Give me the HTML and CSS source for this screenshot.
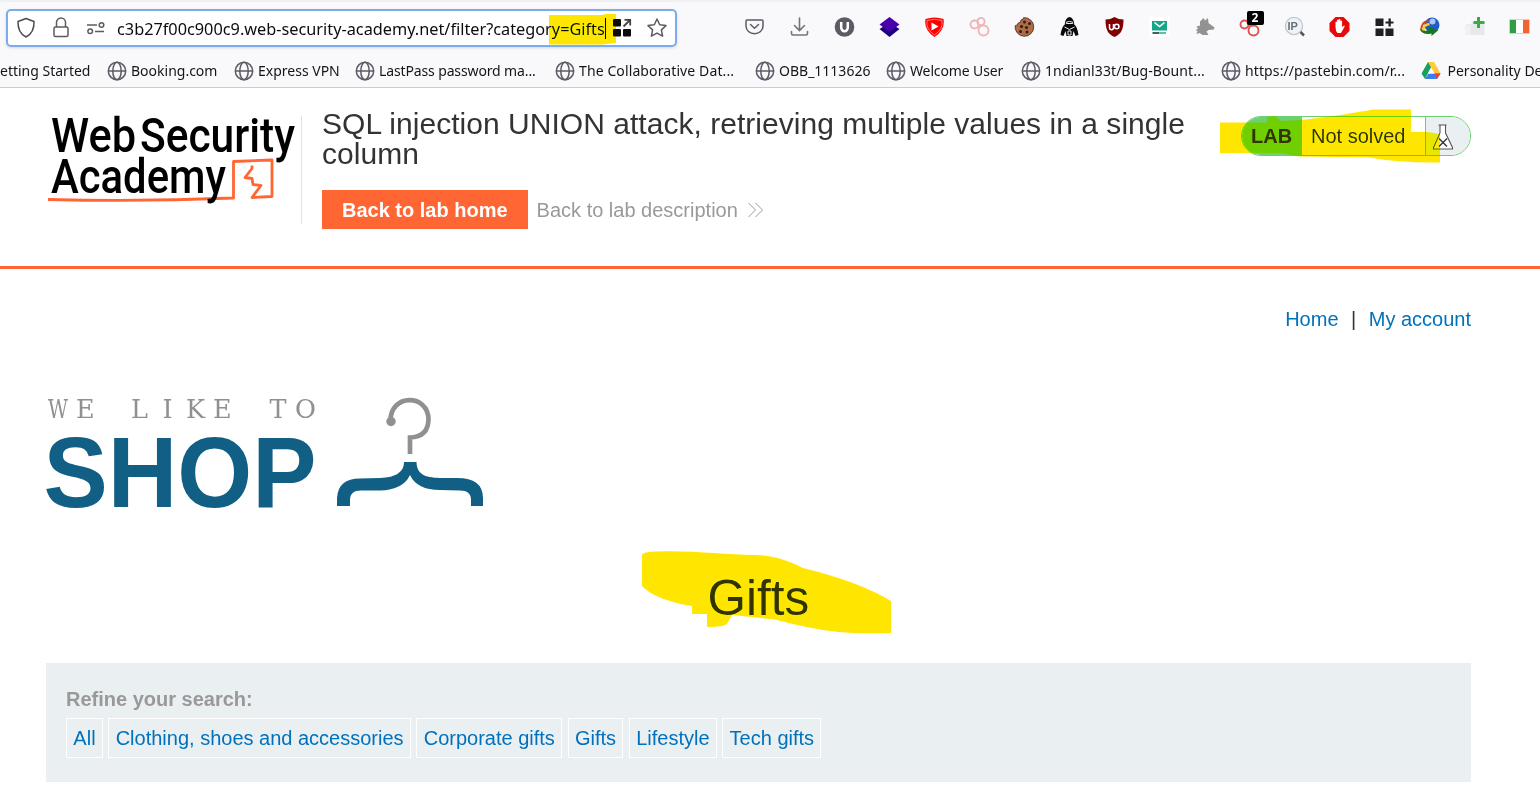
FILE: index.html
```html
<!DOCTYPE html>
<html lang="en">
<head>
<meta charset="utf-8">
<title>SQL injection UNION attack</title>
<link rel="stylesheet" href="styles.css">
</head>
<body>
<svg class="defs" width="0" height="0">
  <symbol id="globe" viewBox="0 0 20 20"><g fill="none" stroke="#5b5b66" stroke-width="1.5"><circle cx="10" cy="10" r="8.7"/><ellipse cx="10" cy="10" rx="4.2" ry="8.7"/><path d="M1.5 10h17"/></g></symbol>
</svg>
<div class="chrome">
  <div class="toolbar">
    <div class="urlbar">
      <svg class="shield" width="20" height="22" viewBox="0 0 20 22"><path d="M10 1.5 18 4.5C18.3 12 15 17.5 10 20 5 17.5 1.700 12 2 4.500Z" fill="none" stroke="#4c4c52" stroke-width="1.5" stroke-linejoin="round"/></svg>
      <svg class="lock" width="18" height="22" viewBox="0 0 18 22"><g fill="none" stroke="#5b5b62" stroke-width="1.5"><rect x="2" y="10" width="14" height="9.500" rx="1.500"/><path d="M4.500 10V5.500a4.500 4.500 0 0 1 9 0V10"/></g></svg>
      <svg class="perms" width="20" height="14" viewBox="0 0 20 14"><g fill="none" stroke="#5b5b62" stroke-width="1.500"><path d="M1 4h10M9 10.500h9"/><circle cx="15.500" cy="4" r="2.300"/><circle cx="4.200" cy="10.300" r="2.300"/></g></svg>
      <span class="url">c3b27f00c900c9.web-security-academy.net/filter?category=Gifts</span>
      <svg class="tiles" width="20" height="20" viewBox="0 0 20 20"><g fill="#0c0c0d"><rect x="1" y="1" width="8" height="7.500" rx="1"/><rect x="1" y="11" width="8" height="7.500" rx="1"/><rect x="11" y="11" width="8" height="7.500" rx="1"/></g><path d="M11.500 8.500 17.500 2.500M12.500 1.800h5.700v5.700" fill="none" stroke="#444" stroke-width="1.800"/></svg>
      <svg class="star" width="22" height="22" viewBox="0 0 22 22"><path d="M11 2l2.700 5.800 6.300.8-4.600 4.300 1.200 6.300L11 16.100 5.400 19.200l1.200-6.300L2 8.600l6.300-.8Z" fill="none" stroke="#5b5b62" stroke-width="1.500" stroke-linejoin="round"/></svg>
    </div>
    <div class="extensions">
      <svg viewBox="0 0 20 20"><path d="M2.500 3h15q1 0 1 1v5a8.500 7.700 0 0 1-17 0V4q0-1 1-1Z M6 7.500l4 3.700 4-3.700" fill="none" stroke="#5b5b66" stroke-width="1.500" stroke-linecap="round" stroke-linejoin="round"/></svg>
      <svg viewBox="0 0 20 20"><path d="M10 1v12M5 8.500l5 5 5-5M2 14.500v2q0 1.500 1.500 1.500h13q1.500 0 1.500-1.500v-2" fill="none" stroke="#73737c" stroke-width="1.600" stroke-linecap="round"/></svg>
      <svg viewBox="0 0 20 20"><circle cx="10" cy="10" r="9.800" fill="#5b5b66"/><path d="M6.700 5v5.500a3.300 3.700 0 0 0 6.600 0V5" fill="none" stroke="#fff" stroke-width="2.500"/></svg>
      <svg viewBox="0 0 20 20"><path d="M0 12 10 6l10 6-10 8Z" fill="#1b0080"/><path d="M0 7.500 10 0l10 7.500L10 15Z" fill="#4b00ae"/></svg>
      <svg viewBox="0 0 20 20"><path d="M1 2Q10-1 19 2 21 13 10 20-1 13 1 2Z" fill="#f00"/><path d="M2.500 3.500Q10 1 17.500 3.500 19 12 10 18 1 12 2.500 3.500Z" fill="none" stroke="#ff9a9a" stroke-width=".8"/><path d="M7 5.500v8l7-4Z" fill="#fff"/></svg>
      <svg viewBox="0 0 20 20"><g fill="none" stroke="#ecb5b8" stroke-width="1.900"><circle cx="5" cy="7.500" r="4"/><circle cx="11.500" cy="4.500" r="3.600"/><circle cx="14" cy="13.500" r="5"/></g></svg>
      <svg viewBox="0 0 20 20"><path d="M9 .7a9.300 9.300 0 1 1-8.300 8q2.500 0 2.800-2.500Q7 6 6.500 3q2.500 0 2.500-2.300Z" fill="#b46a43" stroke="#593d31" stroke-width="1"/><g fill="#272120"><circle cx="10" cy="5" r="1.500"/><circle cx="15" cy="6.500" r="1.500"/><circle cx="7" cy="9.500" r="1.600"/><circle cx="12" cy="10.500" r="1.600"/><circle cx="6" cy="14.500" r="1.500"/><circle cx="12.500" cy="15" r="1.500"/></g></svg>
      <svg viewBox="0 0 20 20"><path d="M10 0q4.500 1 4.700 7.500Q18 10 19 18l-3 1-2-5-1 5H7l-1-5-2 5-3-1Q2 10 5.300 7.500 5.500 1 10 0Z" fill="#090909"/><path d="M6.800 5.200q3.200-1.600 6.400 0v1.300H6.800ZM5 10l5 2.500 5-2.500M8.500 14h3v4h-3Z" fill="none" stroke="#fff" stroke-width=".9"/></svg>
      <svg viewBox="0 0 20 20"><path d="M10 0q4 2.500 9 2.500C19 12 17 17 10 20 3 17 1 12 1 2.500Q6 2.500 10 0Z" fill="#800000"/><path d="M5 7v3.500a1.800 2 0 0 0 4 0V7" fill="none" stroke="#fff" stroke-width="1.500"/><circle cx="12.200" cy="9.500" r="2.300" fill="none" stroke="#fff" stroke-width="1.500"/></svg>
      <svg viewBox="0 0 20 20"><rect width="20" height="20" fill="#fff"/><rect x="2.500" y="4" width="15" height="9.500" fill="#18a68a"/><path d="m5 5.500 5 4 5-4" fill="none" stroke="#fff" stroke-width="1.600"/><path d="M3 16h7" stroke="#244" stroke-width="1.700"/><path d="M10.500 16h6" stroke="#3bb89f" stroke-width="1.700"/></svg>
      <svg viewBox="0 0 20 20"><path d="M5.500 4.500 9 1l1.500 2.500L13.500 1l.5 5 6 4.500-.5 2-5.500.5-2 1.500 2 3.500H8l-3-2-3 1 1-3-2-1 2.500-1L2 9.500l3.500-1Z" fill="#929292"/></svg>
      <div class="badged"><svg viewBox="0 0 20 20"><g fill="none" stroke="#df5050" stroke-width="1.900"><circle cx="5" cy="7.500" r="4"/><circle cx="11.500" cy="4.500" r="3.600"/><circle cx="14" cy="13.500" r="5"/></g></svg><span class="badge">2</span></div>
      <svg viewBox="0 0 20 20"><circle cx="9.500" cy="9" r="8.600" fill="#edf3f6" stroke="#bfc9cf" stroke-width="1.300"/><path d="m16 15 3.500 3.500" stroke="#555" stroke-width="2.500"/><text x="3" y="13" class="ip">IP</text></svg>
      <svg viewBox="0 0 20 20"><path d="M6 0h8l6 6v8l-6 6H6l-6-6V6Z" fill="#e80909"/><path d="M6 10V5q1-1 1.500 0V3q1-1 1.700 0V2.500q1-1 1.700 0V4q1-1 1.700 0v6l2-1.500q1 .5.300 1.500L11.500 16H8Q6 14 6 10Z" fill="#fff"/></svg>
      <svg viewBox="0 0 20 20"><path d="M1 1.500h8v7.500H1ZM1 11.500h8V19H1ZM11 11.500h8V19h-8ZM14 1.500h2.300v8H14ZM11 4.500h8v2h-8Z" fill="#202024"/></svg>
      <svg viewBox="0 0 20 20"><circle cx="12.500" cy="8" r="7.500" fill="#235bc6"/><circle cx="13" cy="4.500" r="3" fill="#a8caf5"/><path d="M2 14Q1 5 9 4" fill="none" stroke="#d84519" stroke-width="1.800"/><path d="M4 14Q3 8 10 7" fill="none" stroke="#f5cf22" stroke-width="2.600"/><path d="M0 10q1 5 9 3.500V10l10 3-7 6v-2.500Q1 19 0 10Z" fill="#167720"/></svg>
      <svg viewBox="0 0 20 20"><path d="M2 7h9v11H2ZM7 5h13v13H7Z" fill="#e5e9ec"/><path d="M0 8h6v10H1Z" fill="#f0f1f3"/><path d="M12.500 0h3v4H20v3h-4.500v4h-3V7H9V4h3.500Z" fill="#39a949"/></svg>
      <svg viewBox="0 0 20 20"><path d="M0 2.500h20v14H0Z" fill="#b9a58c"/><path d="M.5 3H6.500v13h-6Z" fill="#2f9e42"/><path d="M6.500 3h7v13h-7Z" fill="#fff"/><path d="M13.500 3h6v13h-6Z" fill="#f3632d"/></svg>
    </div>
  </div>
  <div class="bookmarks">
    <span class="bm">etting Started</span>
    <span class="bm"><svg><use href="#globe"/></svg>Booking.com</span>
    <span class="bm"><svg><use href="#globe"/></svg>Express VPN</span>
    <span class="bm tight"><svg><use href="#globe"/></svg>LastPass password ma...</span>
    <span class="bm wide"><svg><use href="#globe"/></svg>The Collaborative Dat...</span>
    <span class="bm"><svg><use href="#globe"/></svg>OBB_1113626</span>
    <span class="bm tight"><svg><use href="#globe"/></svg>Welcome User</span>
    <span class="bm wide"><svg><use href="#globe"/></svg>1ndianl33t/Bug-Bount...</span>
    <span class="bm wide"><svg><use href="#globe"/></svg>https://pastebin.com/r...</span>
    <span class="bm drive"><svg viewBox="0 0 20 20"><path d="M7 1h6L4 18 .5 12.500Z" fill="#16a05b"/><path d="M7 1h6l6.500 11.500h-6Z" fill="#ffcb3b"/><path d="M4 18l3.500-5.500h12L16 18Z" fill="#3d7df0"/><path d="M13.500 12.500h6L16 18Z" fill="#e94235"/><path d="m10 6.500 3.300 6H6.700Z" fill="#f9f9fb"/></svg>Personality De</span>
  </div>
</div>

<header class="lab-header">
  <div class="logo">
    <svg width="255" height="108" viewBox="46 116 255 108">
      <path d="M48 199.500Q140 202 233.500 198V161.500L272 160v36.500l-20 1 9-12-8-1-1-6-7-1 7-9v-3" fill="none" stroke="#ff6633" stroke-width="2.800" stroke-linejoin="round"/>
      <g class="wordmark">
        <text x="51" y="152" textLength="85" lengthAdjust="spacingAndGlyphs">Web</text>
        <text x="140" y="152" textLength="155" lengthAdjust="spacingAndGlyphs">Security</text>
        <text x="51" y="193" textLength="175" lengthAdjust="spacingAndGlyphs">Academy</text>
      </g>
    </svg>
  </div>
  <div class="title">
    <h2>SQL injection UNION attack, retrieving multiple values in a single column</h2>
    <div class="actions">
      <a class="button">Back to lab home</a>
      <a class="back">Back to lab description <svg width="15" height="16" viewBox="0 0 15 16"><path d="m.5 1 7 7-7 7M7.500 1l7 7-7 7" fill="none" stroke="#999" stroke-width="1"/></svg></a>
    </div>
  </div>
  <div class="status">
    <span class="lab">LAB</span><span class="state">Not solved</span>
    <span class="flask"><svg width="22" height="28" viewBox="0 0 22 28"><path d="M6.500 2h8M8 2v8L1.500 24.500v1.500h19v-1.500L13.500 10V2" fill="#fff" stroke="#555" stroke-width="1.100"/><path d="m7 15.500 8 8m0-8-8 8" stroke="#333" stroke-width="1.400"/></svg></span>
  </div>
</header>

<main>
  <nav><a>Home</a><span>|</span><a>My account</a></nav>
  <svg class="shop" width="440" height="114" viewBox="46 396 440 114">
    <g class="tagline">
      <text x="48" y="418" textLength="20" lengthAdjust="spacingAndGlyphs">W</text>
      <text y="418" x="76 131 162.500 186 213 269.500 295">ELIKETO</text>
    </g>
    <text class="shop-name" x="43.500" y="507" textLength="273" lengthAdjust="spacingAndGlyphs">SHOP</text>
    <path d="M390.500 421C390 393.500 428.500 393.500 428.500 419.500Q428 437 410 437.500V454" fill="none" stroke="#8f9090" stroke-width="4.700"/>
    <circle cx="391" cy="421.500" r="4.700" fill="#8f9090"/>
    <path d="M404 462h12.500C417 474 424 477.500 440 478H457Q483 478 483 498v8H471V500Q471 490.500 460 490.500L440 490Q417 490 410 475 403 490 380 490.500H361Q350 490.500 350 500v6H337V498Q338 478.500 360 478.500L380 478Q404 477 404 462Z" fill="#125f85"/>
  </svg>
  <h1>Gifts</h1>
  <section class="filters">
    <label>Refine your search:</label>
    <div class="chips"><a>All</a><a>Clothing, shoes and accessories</a><a>Corporate gifts</a><a>Gifts</a><a>Lifestyle</a><a>Tech gifts</a></div>
  </section>
</main>

<svg class="marker" width="1540" height="802" viewBox="0 0 1540 802">
  <path d="M549 15H602L606 14H616V43L602 44.500H549Z"/>
  <path d="M1220 122.500H1267V117L1275 116L1281 121L1302 120Q1350 114 1373 109.500H1411V132H1427L1440 134V162.500Q1400 163 1369 157.500L1300 156.500 1280 153H1220Z"/>
  <path d="M642 555Q643 551 660 551.500C695 550.500 725 555 755 555Q778 555 803 568 860 582 891 601V633Q860 634 838 632 810 629 775 619.500L732 615 727 624Q724 627 707 627V614H692V606Q655 600 642 586Z"/>
</svg>
</body>
</html>
```
FILE: styles.css
```css
* { box-sizing: border-box; }
body {
  margin: 0;
  height: 802px;
  position: relative;
  overflow: hidden;
  background: #fff;
  color: #333332;
  font: 20px/24px "Liberation Sans", Arial, sans-serif;
}
.defs { position: absolute; }
h1, h2 { margin: 0; font-weight: normal; }

/* browser toolbar */
.chrome {
  height: 88px;
  padding-top: 7px;
  border-top: 2px solid #f0f0f2;
  border-bottom: 1px solid #ccc;
  background: #f9f9fb;
  color: #15141a;
  font-family: "Noto Sans", "Open Sans", sans-serif;
}
.toolbar { display: flex; height: 38px; padding-left: 6px; }
.urlbar {
  display: flex;
  flex: none;
  align-items: center;
  width: 671px;
  height: 38px;
  padding-left: 8px;
  border: 2px solid #7cacf0;
  border-radius: 5px;
  background: #fff;
  box-shadow: 0 1px 3px #0002;
}
.lock { margin-left: 16px; }
.perms { margin-left: 16px; margin-top: -1px; }
.url {
  width: 489px;
  margin-left: 11px;
  border-right: 1px solid #000;
  color: #0c0c0d;
  font-size: 16.3px;
  line-height: 20px;
  padding-top: 1px;
  white-space: nowrap;
}
.tiles { margin-left: 6px; }
.star { margin-left: 14px; }
.extensions { display: flex; flex: none; margin-left: 54.5px; }
.extensions > * { flex: none; width: 45px; height: 20px; margin-top: 8px; }
.badged { position: relative; }
.badged svg { display: block; width: 45px; height: 20px; }
.badge {
  position: absolute;
  left: 20px;
  top: -6px;
  width: 17px;
  height: 14px;
  border-radius: 2px;
  background: #000;
  color: #fff;
  font: bold 12px/14px "Noto Sans", sans-serif;
  text-align: center;
}
.ip { font: bold 11px "Liberation Sans", sans-serif; fill: #687078; }
.bookmarks {
  display: grid;
  grid-template-columns: 106.5px 127px 121px 200px 200px 131px 135px 200px 200px 140px;
  height: 40px;
  margin-top: 4px;
  font-size: 14px;
  line-height: 40px;
}
.bm { display: flex; align-items: center; white-space: nowrap; }
.bm.tight { letter-spacing: -0.13px; }
.bm.wide { letter-spacing: 0.11px; }
.bm svg { flex: none; width: 20px; height: 20px; margin-right: 4.5px; }
.bm.drive svg { margin-right: 7px; }

/* lab banner */
.lab-header {
  display: flex;
  align-items: flex-start;
  height: 181px;
  padding: 0 69px 0 46px;
  border-bottom: 3px solid #ff6633;
}
.logo { width: 256px; height: 108px; margin-top: 28px; border-right: 1px solid #e2e2e2; }
.logo svg { display: block; overflow: visible; }
.wordmark { font: 500 48px Roboto, sans-serif; fill: #000; }
.title { width: 880px; margin: 21px 0 0 20px; }
h2 { font-size: 30px; line-height: 30px; letter-spacing: 0.03px; }
.actions { display: flex; align-items: center; margin-top: 21px; }
.button { padding: 1px 20px 0; background: #ff6633; color: #fff; font-weight: bold; line-height: 38px; }
.back { display: flex; align-items: center; gap: 10px; margin-left: 9px; color: #999; }
.status {
  display: flex;
  width: 230px;
  height: 40px;
  margin: 28px 0 0 auto;
  overflow: hidden;
  border: 1px solid #6ccf70;
  border-radius: 20px;
  line-height: 39px;
}
.lab { width: 60px; padding-left: 9px; background: #6fcf74; font-weight: bold; }
.state { width: 124px; padding-left: 9px; border-right: 1px solid #6ccf70; }
.flask { flex: 1; padding: 6px 0 0 6px; background: #eaeff2; }
.flask svg { display: block; }

/* shop */
main { padding: 38px 69px 0 46px; }
nav { display: flex; justify-content: flex-end; gap: 12.5px; }
nav a, .chips a { color: #0071bc; }
.shop { display: block; margin-top: 65px; overflow: visible; }
.tagline { font: 25.5px "DejaVu Serif", serif; fill: #8f9090; }
.shop-name { font: bold 101px "Liberation Sans", Arial, sans-serif; fill: #125f85; }
h1 { margin-top: 58px; font-size: 49.5px; line-height: 60px; text-align: center; }
.filters { height: 119px; margin-top: 35px; padding: 24px 20px; background: #eaeff2; }
.filters label { display: block; color: #999; font-weight: bold; }
.chips { display: flex; gap: 5.4px; margin-top: 7px; }
.chips a { padding: 0 6.35px; border: 1px solid #fff; line-height: 38px; }

/* highlighter strokes */
.marker { position: absolute; left: 0; top: 0; fill: #ffe600; mix-blend-mode: darken; pointer-events: none; }
```
